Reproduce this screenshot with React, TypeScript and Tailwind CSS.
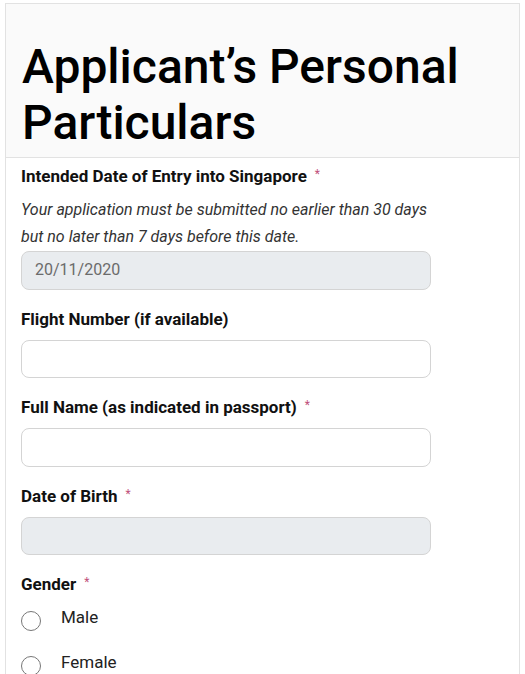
import React from "react";

const font = { fontFamily: "Roboto, 'Noto Sans', sans-serif" };

const Label = ({ text, required }: { text: string; required?: boolean }) => (
  <div className="flex items-start h-6 text-[17px] leading-6 font-bold text-[#111]">
    <span>{text}</span>
    {required && (
      <span className="ml-[8px] text-[12px] leading-[20px] font-normal text-[#c0507a]">*</span>
    )}
  </div>
);

const Input = ({ value, disabled }: { value?: string; disabled?: boolean }) => (
  <div
    className={
      "h-[38.5px] w-[410px] rounded-lg border border-[#d4d4d4] px-[13px] flex items-center text-[16px] text-[#6b6b6b] " +
      (disabled ? "bg-[#e9ecef]" : "bg-white")
    }
  >
    {value}
  </div>
);

const Radio = ({ label }: { label: string }) => (
  <div className="flex items-center h-[24px]">
    <span className="w-[20px] h-[20px] rounded-full border border-[#777] bg-white mt-[6px]" />
    <span className="ml-[20px] text-[17px] text-[#222]">{label}</span>
  </div>
);

export default function App() {
  return (
    <div className="bg-white min-h-screen pt-[3px] pl-[5px]" style={font}>
      <div className="w-[515px] border border-[#e2e2e2] h-[700px]">
        <div className="bg-[#fafafa] border-b border-[#e2e2e2] pt-[35px] pb-[6px] pl-[16px]">
          <h1 className="text-[48px] leading-[56px] font-medium text-black">
            Applicant’s Personal Particulars
          </h1>
        </div>
        <div className="pl-[15px] pt-[6px]">
          <Label text="Intended Date of Entry into Singapore" required />
          <p className="mt-[8px] text-[16px] leading-[27px] italic text-[#333] w-[420px]">
            Your application must be submitted no earlier than 30 days but no later than 7 days before this date.
          </p>
          <div className="mt-px">
            <Input value="20/11/2020" disabled />
          </div>

          <div className="mt-[17px]">
            <Label text="Flight Number (if available)" />
          </div>
          <div className="mt-[9px]">
            <Input />
          </div>

          <div className="mt-[17px]">
            <Label text="Full Name (as indicated in passport)" required />
          </div>
          <div className="mt-[9px]">
            <Input />
          </div>

          <div className="mt-[17px]">
            <Label text="Date of Birth" required />
          </div>
          <div className="mt-[9px]">
            <Input disabled />
          </div>

          <div className="mt-[17px]">
            <Label text="Gender" required />
          </div>
          <div className="mt-[10px] flex flex-col gap-[21px]">
            <Radio label="Male" />
            <Radio label="Female" />
          </div>
        </div>
      </div>
    </div>
  );
}
